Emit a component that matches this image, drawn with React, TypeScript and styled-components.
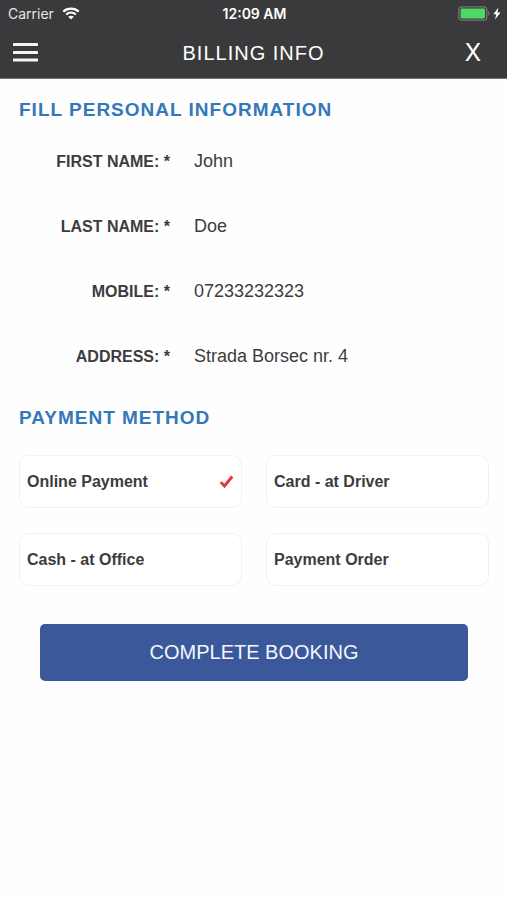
import React, { useState } from "react";
import styled, { createGlobalStyle } from "styled-components";

const GlobalStyle = createGlobalStyle`
  * { box-sizing: border-box; }
  body {
    margin: 0;
    background: #fefefe;
    color: #3c3c3e;
    font-family: "Liberation Sans", Arial, sans-serif;
  }
  button, input { font: inherit; color: inherit; }
`;

const Header = styled.header`
  background: #3a3a3c;
  color: #fff;
  border-bottom: 1px solid #77777a;
`;

const StatusBar = styled.div`
  display: grid;
  grid-template-columns: 1fr auto 1fr;
  align-items: center;
  height: 27px;
  padding: 0 6px 0 8px;
  font-family: Inter, sans-serif;
  font-size: 14px;
  line-height: 20px;
`;

const Carrier = styled.div`
  display: flex;
  align-items: center;
  gap: 8px;
  color: #e6e6e8;
`;

const Time = styled.div`
  font-weight: 600;
`;

const Power = styled.div`
  display: flex;
  align-items: center;
  justify-content: flex-end;
  gap: 3px;
`;

const NavBar = styled.nav`
  display: grid;
  grid-template-columns: 60px 1fr 60px;
  align-items: center;
  height: 51px;
`;

const NavButton = styled.button<{ $end?: boolean }>`
  display: flex;
  align-items: center;
  justify-content: ${(p) => (p.$end ? "flex-end" : "flex-start")};
  height: 44px;
  padding: 0 ${(p) => (p.$end ? 26 : 13)}px;
  border: 0;
  background: none;
  font-family: Inter, sans-serif;
  font-size: 24px;
  cursor: pointer;
`;

const Title = styled.h1`
  margin: 0;
  text-align: center;
  font-size: 20px;
  line-height: 24px;
  font-weight: 400;
  letter-spacing: 1px;
`;

const Form = styled.form`
  padding: 19px 18px 40px 19px;
`;

const SectionTitle = styled.h2`
  margin: 0;
  font-size: 19px;
  line-height: 24px;
  font-weight: 700;
  letter-spacing: 1px;
  color: #3478ba;
`;

const Fields = styled.div`
  padding: 7px 0 17px;
`;

const Field = styled.div`
  display: grid;
  grid-template-columns: 151px 1fr;
  gap: 24px;
  align-items: center;
  height: 65px;
`;

const FieldLabel = styled.label`
  text-align: right;
  font-size: 16px;
  font-weight: 700;
`;

const FieldInput = styled.input`
  width: 100%;
  height: 44px;
  padding: 0;
  border: 0;
  outline: 0;
  background: transparent;
  font-size: 18px;
`;

const Options = styled.div`
  display: grid;
  grid-template-columns: 1fr 1fr;
  gap: 25px 24px;
  padding: 25px 0 38px;
`;

const Option = styled.label`
  position: relative;
  display: flex;
  align-items: center;
  justify-content: space-between;
  height: 53px;
  padding: 0 7px;
  border: 1px solid #f1f1f1;
  border-radius: 10px;
  background: #fff;
  font-size: 16px;
  font-weight: 700;
  cursor: pointer;
`;

const OptionRadio = styled.input`
  position: absolute;
  inset: 0;
  width: 100%;
  height: 100%;
  margin: 0;
  opacity: 0;
  cursor: pointer;
`;

const Submit = styled.button`
  display: block;
  width: calc(100% - 42px);
  height: 57px;
  margin: 0 auto;
  border: 0;
  border-radius: 5px;
  background: #3a589a;
  color: #f4f7fd;
  font-size: 20px;
  cursor: pointer;
`;

const WifiIcon = () => (
  <svg width="18" height="13" viewBox="0 0 18 13" fill="none" aria-hidden="true">
    <path d="M1.3 4.6C5.6 .6 12.4 .6 16.7 4.6" stroke="#fff" strokeWidth="2.3" />
    <path d="M4.2 7.5C7 5 11 5 13.8 7.5" stroke="#fff" strokeWidth="2.2" />
    <path d="M9 12.6 6.2 9.7C7.8 8.4 10.2 8.4 11.8 9.7Z" fill="#fff" />
  </svg>
);

const BatteryIcon = () => (
  <svg width="32" height="15" viewBox="0 0 32 15" fill="none" aria-hidden="true">
    <rect x=".8" y=".8" width="28" height="13.4" rx="3.2" stroke="#77777a" strokeWidth="1.3" />
    <rect x="2.6" y="2.6" width="24.4" height="9.8" rx="1.4" fill="#4cd964" />
    <path d="M30.2 5.2C31.9 5.9 31.9 9.1 30.2 9.8Z" fill="#77777a" />
  </svg>
);

const BoltIcon = () => (
  <svg width="8" height="13" viewBox="0 0 8 13" aria-hidden="true">
    <path d="M5.4.5.4 7.2H3.3L2 12.5 7.6 5.4H4.5Z" fill="#fff" />
  </svg>
);

const MenuIcon = () => (
  <svg width="25" height="19" viewBox="0 0 25 19" fill="#f4f4f4" aria-hidden="true">
    <rect y="0" width="25" height="3" rx=".5" />
    <rect y="8" width="25" height="3" rx=".5" />
    <rect y="15.5" width="25" height="3" rx=".5" />
  </svg>
);

const CheckIcon = () => (
  <svg width="15" height="14" viewBox="0 0 15 14" aria-hidden="true">
    <path d="M.6 8.1 2.9 6.2 5.3 8.8 12.1.6 14.4 2.4 5.6 13.2Z" fill="#e5393f" />
  </svg>
);

const fields = [
  { id: "first", label: "FIRST NAME: *", value: "John", type: "text" },
  { id: "last", label: "LAST NAME: *", value: "Doe", type: "text" },
  { id: "mobile", label: "MOBILE: *", value: "07233232323", type: "tel" },
  { id: "address", label: "ADDRESS: *", value: "Strada Borsec nr. 4", type: "text" },
];

const methods = ["Online Payment", "Card - at Driver", "Cash - at Office", "Payment Order"];

export default function App() {
  const [method, setMethod] = useState(methods[0]);

  return (
    <>
      <GlobalStyle />
      <Header>
        <StatusBar>
          <Carrier>
            Carrier <WifiIcon />
          </Carrier>
          <Time>12:09 AM</Time>
          <Power>
            <BatteryIcon />
            <BoltIcon />
          </Power>
        </StatusBar>
        <NavBar>
          <NavButton type="button" aria-label="Menu">
            <MenuIcon />
          </NavButton>
          <Title>BILLING INFO</Title>
          <NavButton type="button" $end>
            X
          </NavButton>
        </NavBar>
      </Header>
      <Form onSubmit={(e) => e.preventDefault()}>
        <SectionTitle>FILL PERSONAL INFORMATION</SectionTitle>
        <Fields>
          {fields.map((f) => (
            <Field key={f.id}>
              <FieldLabel htmlFor={f.id}>{f.label}</FieldLabel>
              <FieldInput id={f.id} type={f.type} defaultValue={f.value} />
            </Field>
          ))}
        </Fields>
        <SectionTitle id="method-title">PAYMENT METHOD</SectionTitle>
        <Options role="radiogroup" aria-labelledby="method-title">
          {methods.map((m) => (
            <Option key={m}>
              <OptionRadio
                type="radio"
                name="method"
                value={m}
                checked={method === m}
                onChange={() => setMethod(m)}
              />
              {m}
              {method === m && <CheckIcon />}
            </Option>
          ))}
        </Options>
        <Submit type="submit">COMPLETE BOOKING</Submit>
      </Form>
    </>
  );
}
